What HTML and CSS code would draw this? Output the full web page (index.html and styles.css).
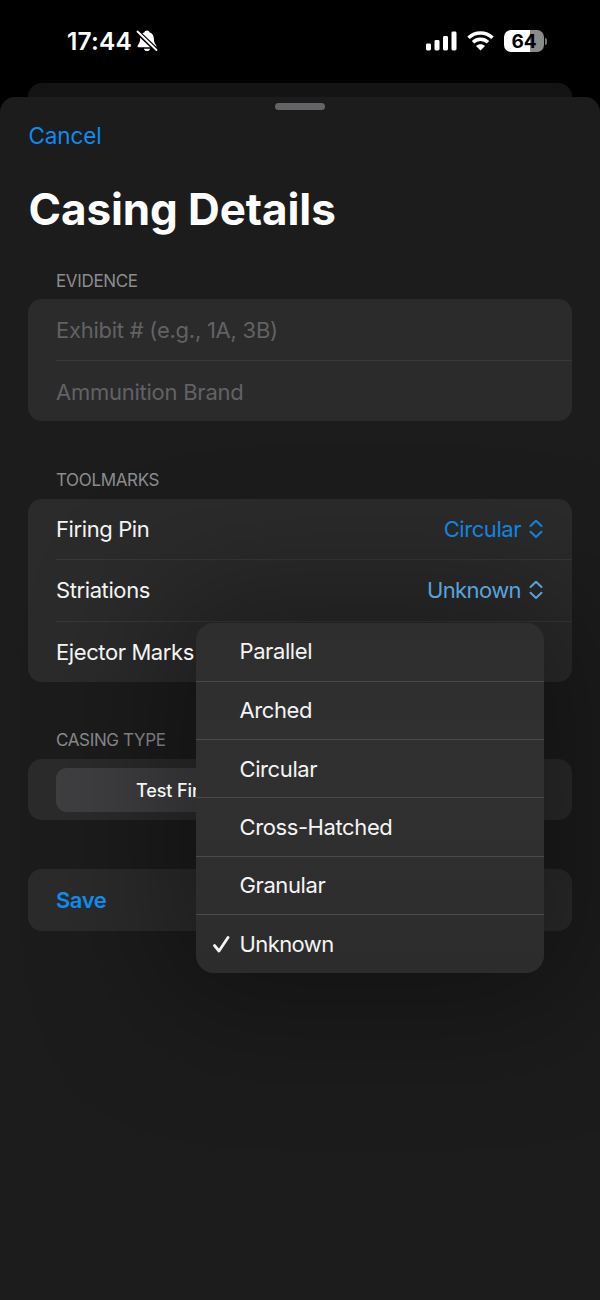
FILE: index.html
```html
<!DOCTYPE html>
<html lang="en">
<head>
<meta charset="utf-8">
<title>Casing Details</title>
<link rel="stylesheet" href="styles.css">
</head>
<body>
<div class="screen">
  <header class="status">
    <div class="status-left">
      <span class="time">17:44</span>
      <svg class="bell" width="22" height="24" viewBox="0 0 22 24">
        <path d="M11 1.5C9.500 1.500 8.700 2.400 8.500 3.200C5.500 4.200 4.200 6.700 4.100 10C4 14 2.700 14.700 1.700 16.600C1.300 17.600 1.700 18.200 2.600 18.200H19.400C20.300 18.200 20.700 17.600 20.300 16.600C19.300 14.700 18 14 17.900 10C17.800 6.700 16.500 4.200 13.500 3.200C13.300 2.400 12.500 1.500 11 1.500Z" fill="#fff"/>
        <path d="M7.800 19.700H14.200C13.700 21.300 12.600 22 11 22S8.300 21.300 7.800 19.700Z" fill="#fff"/>
        <path d="M1 2.500L21 21.500" stroke="#000" stroke-width="4.600"/>
        <path d="M1.500 2.500L20.500 21" stroke="#fff" stroke-width="1.900" stroke-linecap="round"/>
      </svg>
    </div>
    <div class="status-right">
      <svg width="31" height="20" viewBox="0 0 31 20" fill="#fff">
        <rect x="0" y="12.500" width="5" height="7" rx="1.400"/>
        <rect x="8.500" y="9" width="5" height="10.500" rx="1.400"/>
        <rect x="17" y="5" width="5" height="14.500" rx="1.400"/>
        <rect x="25.500" y="0.500" width="5" height="19" rx="1.400"/>
      </svg>
      <svg class="wifi" width="27" height="20" viewBox="0 0 27 20" fill="none" stroke="#fff">
        <path d="M1.500 6.800C8.300 .3 18.700 .3 25.500 6.800" stroke-width="3.600"/>
        <path d="M6 11.300C10.300 7.300 16.700 7.300 21 11.300" stroke-width="3.500"/>
        <path d="M13.500 19.500L9 15C11.700 12.500 15.300 12.500 18 15Z" fill="#fff" stroke="none"/>
      </svg>
      <div class="battery">
        <span class="battery-body">64</span>
        <span class="battery-tip"></span>
      </div>
    </div>
  </header>
  <div class="back-sheet"></div>
  <main class="sheet">
    <div class="grabber"></div>
    <a class="cancel">Cancel</a>
    <h1 class="title">Casing Details</h1>

    <h2 class="label evidence">EVIDENCE</h2>
    <section class="card">
      <div class="row hint"><span>Exhibit # (e.g., 1A, 3B)</span></div>
      <div class="row hint"><span>Ammunition Brand</span></div>
    </section>

    <h2 class="label toolmarks">TOOLMARKS</h2>
    <section class="card">
      <div class="row"><span class="name">Firing Pin</span>
        <span class="picker">Circular<svg width="14" height="20" viewBox="0 0 14 20"><path d="M1.500 7L7 1.700L12.500 7M1.500 12.700L7 18L12.500 12.700"/></svg></span>
      </div>
      <div class="row"><span class="name loose">Striations</span>
        <span class="picker active">Unknown<svg width="14" height="20" viewBox="0 0 14 20"><path d="M1.500 7L7 1.700L12.500 7M1.500 12.700L7 18L12.500 12.700"/></svg></span>
      </div>
      <div class="row"><span class="name">Ejector Marks</span></div>
    </section>

    <h2 class="label type">CASING TYPE</h2>
    <section class="card segment-card">
      <div class="segments"><div class="segment"><span class="above">Test Fired</span></div></div>
    </section>

    <section class="card save-card">
      <div class="row save"><span class="above">Save</span></div>
    </section>

    <div class="menu-shadow"></div>
    <div class="menu">
      <div class="option">Parallel</div>
      <div class="option">Arched</div>
      <div class="option">Circular</div>
      <div class="option">Cross-Hatched</div>
      <div class="option">Granular</div>
      <div class="option tight"><svg class="check" width="18" height="18" viewBox="0 0 18 18"><path d="M1.500 10.500L6 16L15 2.500"/></svg>Unknown</div>
    </div>
  </main>
</div>
</body>
</html>
```
FILE: styles.css
```css
* { box-sizing: border-box; }
body { margin: 0; background: #000; }
.screen {
  width: 600px;
  height: 1300px;
  overflow: hidden;
  display: flex;
  flex-direction: column;
  font-family: Inter, "Liberation Sans", sans-serif;
  font-size: 22px;
  letter-spacing: -0.4px;
  color: #f4f4f4;
}
.status {
  height: 83px;
  padding: 0 53px 0 67px;
  display: flex;
  justify-content: space-between;
}
.status-left, .status-right { display: flex; align-items: center; height: 82px; }
.time { font-size: 24.5px; font-weight: 600; color: #fff; letter-spacing: 0.2px; }
.bell { margin-left: 4px; }
.wifi { margin-left: 10.500px; }
.battery { display: flex; align-items: center; margin-left: 10px; }
.battery-body {
  width: 40px;
  height: 22px;
  border-radius: 7px;
  background: linear-gradient(90deg, #fff 64%, #8b8b8b 64%);
  color: #000;
  font-size: 19px;
  font-weight: 700;
  letter-spacing: 0;
  line-height: 23px;
  text-align: center;
}
.battery-tip { width: 2px; height: 7px; margin-left: 1px; border-radius: 0 2px 2px 0; background: #777; }
.back-sheet { height: 14px; margin: 0 28px; border-radius: 14px 14px 0 0; background: #141414; }
.sheet {
  position: relative;
  flex: 1;
  padding: 6px 28px 0;
  border-radius: 15px 15px 0 0;
  background: #1c1c1c;
  display: flex;
  flex-direction: column;
}
.grabber { width: 50px; height: 7px; border-radius: 4px; background: #646467; align-self: center; }
.cancel {
  margin: 11px 0 0 0.500px;
  line-height: 30px;
  font-size: 22.5px;
  letter-spacing: -0.1px;
  color: #0e8bee;
}
.title {
  margin: 30px 0 0 0.500px;
  line-height: 56px;
  font-size: 44px;
  font-weight: 700;
  color: #fff;
  letter-spacing: -0.1px;
}
.label {
  margin: 0;
  padding-left: 28px;
  font-size: 17px;
  line-height: 20px;
  font-weight: 400;
  letter-spacing: -0.35px;
  color: #8c8c90;
}
.evidence { margin: 34px 0 8px; }
.toolmarks { margin: 48.500px 0 9px; }
.type { margin: 48px 0 9px; }
.card { border-radius: 14px; background: #2b2b2b; }
.row {
  height: 61.500px;
  margin-left: 28px;
  padding-right: 29px;
  display: flex;
  align-items: center;
  justify-content: space-between;
}
.row:first-child { height: 60.500px; }
.row + .row { border-top: 1px solid #383838; }
.row.hint { padding-top: 1.500px; color: #626265; letter-spacing: -0.25px; }
.name, .above, .picker { position: relative; z-index: 1; }
.loose { letter-spacing: -0.4px; }
.picker { display: flex; align-items: center; color: #1483e0; letter-spacing: -0.45px; }
.picker.active { color: #58a3dc; letter-spacing: -0.6px; }
.picker svg { margin-left: 8px; }
.picker path, .check path {
  fill: none;
  stroke: currentColor;
  stroke-width: 2;
  stroke-linecap: round;
  stroke-linejoin: round;
}
.segment-card { height: 61px; padding: 9px 28px 8px; }
.segments { height: 44px; border-radius: 11px; background: #303032; }
.segment {
  width: 244px;
  height: 44px;
  border-radius: 11px;
  background: #3f3f41;
  font-size: 18px;
  font-weight: 450;
  letter-spacing: -0.1px;
  line-height: 45px;
  text-align: center;
}
.save-card { margin-top: 49px; }
.row.save { height: 61.500px; color: #0f8bee; font-weight: 600; letter-spacing: -0.45px; }
.menu, .menu-shadow {
  position: absolute;
  left: 195.500px;
  top: 525.500px;
  width: 348.500px;
  height: 350px;
  border-radius: 18px;
}
.menu-shadow { box-shadow: 0 0 130px 35px rgba(0, 0, 0, 0.350); }
.menu {
  z-index: 2;
  background: linear-gradient(#2e2e2f, #303030 50%, #2c2c2c);
  display: grid;
  grid-template-rows: repeat(6, 1fr);
}
.option { display: flex; align-items: center; padding-left: 44px; position: relative; }
.option:first-child { padding-bottom: 1px; }
.option + .option { border-top: 1px solid #4a4a4a; }
.tight { letter-spacing: -0.6px; }
.check { position: absolute; left: 17px; }
.check path { stroke-width: 2.800; }
```
